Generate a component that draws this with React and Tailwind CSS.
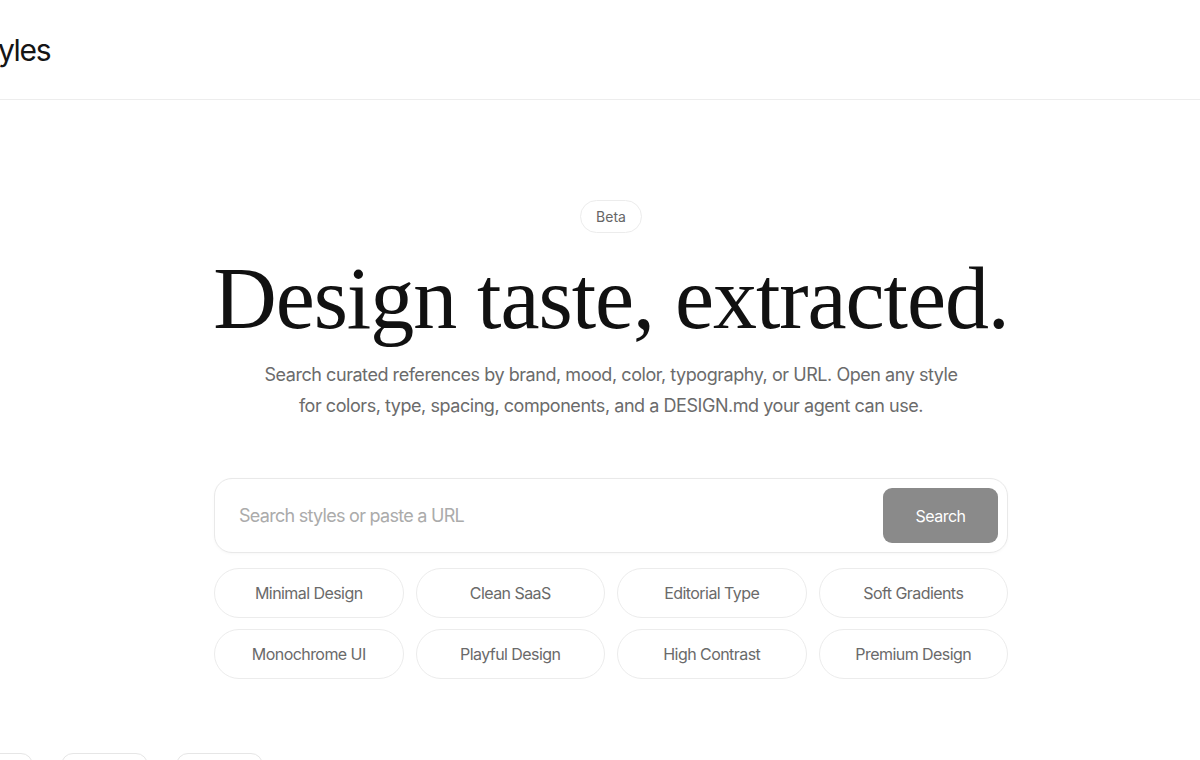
import { useState } from 'react'

const presets = [
  'Minimal Design',
  'Clean SaaS',
  'Editorial Type',
  'Soft Gradients',
  'Monochrome UI',
  'Playful Design',
  'High Contrast',
  'Premium Design',
]

const filters = ['All', 'Brands', 'Moods']

export default function App() {
  const [query, setQuery] = useState('')

  return (
    <div className="min-h-screen overflow-hidden bg-white font-['Inter',sans-serif] text-[#111]">
      {/* Header */}
      <header className="flex h-[100px] items-center border-b border-[#ededed]">
        <span className="-ml-[29px] pt-[2px] text-[30px] font-normal tracking-[-0.045em] text-[#151515]">Styles</span>
      </header>

      {/* Hero */}
      <main className="flex flex-col items-center pl-[22px] pt-[100px]">
        <span className="rounded-full border border-[#ececec] px-[15px] py-[6px] text-[14px] leading-[19px] text-[#666]">
          Beta
        </span>

        <h1 className="mt-[22px] font-['Liberation_Serif',serif] text-[88px] leading-[1] tracking-[-0.012em] text-[#111]">
          Design taste, extracted.
        </h1>

        <p className="mt-[16px] max-w-[712px] text-center text-[18px] leading-[31px] tracking-[-0.025em] text-[#6b6b6b]">
          Search curated references by brand, mood, color, typography, or URL. Open any style
          for colors, type, spacing, components, and a DESIGN.md your agent can use.
        </p>

        <div className="mt-[57px] w-[794px]">
          <form
            onSubmit={(e) => e.preventDefault()}
            className="flex h-[75px] items-center rounded-[18px] border border-[#e9e9e9] bg-white pl-[24px] pr-[9px] shadow-[0_1px_3px_rgba(0,0,0,0.03)]"
          >
            <input
              value={query}
              onChange={(e) => setQuery(e.target.value)}
              placeholder="Search styles or paste a URL"
              className="flex-1 bg-transparent text-[18px] tracking-[-0.04em] text-[#222] outline-none placeholder:text-[#ababab]"
            />
            <button
              type="submit"
              className="h-[55px] w-[115px] rounded-[9px] bg-[#8a8a8a] text-[16px] tracking-[-0.03em] text-white"
            >
              Search
            </button>
          </form>

          <div className="mt-[15px] grid grid-cols-4 gap-x-[12px] gap-y-[11px]">
            {presets.map((p) => (
              <button
                key={p}
                className="h-[50px] rounded-full border border-[#ececec] bg-white text-[16px] tracking-[-0.035em] text-[#6a6a6a]"
              >
                {p}
              </button>
            ))}
          </div>
        </div>
      </main>

      {/* Filter tabs, cut off by the window */}
      <div className="-ml-[54px] mt-[74px] flex gap-[28px]">
        {filters.map((f) => (
          <span
            key={f}
            className="h-[40px] w-[87px] rounded-[12px] border border-[#e6e6e6] bg-white"
          />
        ))}
      </div>
    </div>
  )
}
